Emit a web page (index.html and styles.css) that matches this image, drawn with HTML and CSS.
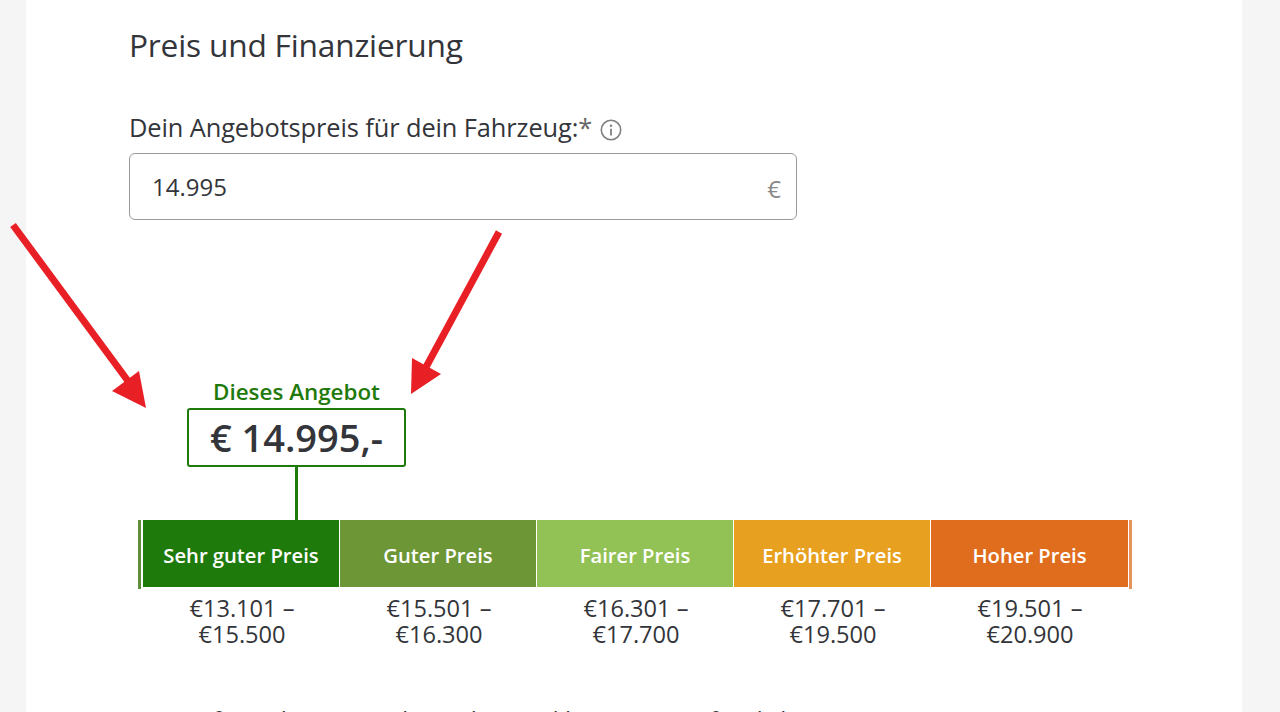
FILE: index.html
```html
<!DOCTYPE html>
<html lang="de">
<head>
  <meta charset="UTF-8">
  <meta name="viewport" content="width=device-width, initial-scale=1.0">
  <title>Preis und Finanzierung</title>
  <link rel="stylesheet" href="styles.css">
</head>
<body>

  <div class="page">
    <h2 class="title">Preis und Finanzierung</h2>

    <label class="field-label">Dein Angebotspreis für dein Fahrzeug:<span class="star">*</span>
      <svg class="info" width="22" height="22" viewBox="0 0 22 22">
        <circle cx="11" cy="11" r="9.7" fill="none" stroke="#808080" stroke-width="1.6"/>
        <circle cx="11" cy="6.8" r="1.2" fill="#808080"/>
        <path d="M11 9.8v6.6" stroke="#808080" stroke-width="1.8" fill="none"/>
      </svg>
    </label>
    <div class="price-input">
      <span>14.995</span>
      <span class="currency">€</span>
    </div>

    <!-- Price gauge -->
    <div class="offer">
      <div class="offer-label">Dieses Angebot</div>
      <div class="offer-box">€ 14.995,-</div>
      <div class="offer-line"></div>
    </div>

    <div class="gauge">
      <div class="bands">
        <div class="band band-1">Sehr guter Preis</div>
        <div class="band band-2">Guter Preis</div>
        <div class="band band-3">Fairer Preis</div>
        <div class="band band-4">Erhöhter Preis</div>
        <div class="band band-5">Hoher Preis</div>
      </div>
      <div class="ranges">
        <div class="range">€13.101 –<br>€15.500</div>
        <div class="range">€15.501 –<br>€16.300</div>
        <div class="range">€16.301 –<br>€17.700</div>
        <div class="range">€17.701 –<br>€19.500</div>
        <div class="range">€19.501 –<br>€20.900</div>
      </div>
    </div>

    <p class="note">Wir prüfen Fahrzeug und Angebot und bewerten es für dich.</p>
  </div>

  <!-- Red arrows drawn over the screenshot -->
  <svg class="arrows" width="1280" height="712" viewBox="0 0 1280 712">
    <path d="M13 225L128 381" stroke="#e91f26" stroke-width="7" fill="none"/>
    <path d="M146 408L112 391L139 371Z" fill="#e91f26"/>
    <path d="M499 232L425 369" stroke="#e91f26" stroke-width="7" fill="none"/>
    <path d="M411 394L412 358L441 374Z" fill="#e91f26"/>
  </svg>

</body>
</html>
```

FILE: styles.css
```css
/* Basic Styling */
body {
  margin: 0;
  height: 712px;
  overflow: hidden;
  background-color: #f5f5f5;
  color: #33353a;
  font-family: "Open Sans", "Noto Sans", Arial, sans-serif;
}

.page {
  box-sizing: border-box;
  width: 1216px;
  height: 712px;
  margin-left: 26px;
  padding: 25px 0 0 103px;
  background-color: #fff;
  overflow: hidden;
}

.title {
  margin: 0;
  font-size: 31.7px;
  line-height: 40px;
  font-weight: 400;
  letter-spacing: -0.2px;
}

.field-label {
  display: flex;
  align-items: center;
  margin-top: 46px;
  height: 32px;
  font-size: 25.4px;
  letter-spacing: -0.1px;
}

.star {
  color: #666;
}

.info {
  margin-left: 8px;
  margin-top: 5px;
}

.price-input {
  box-sizing: border-box;
  display: flex;
  justify-content: space-between;
  align-items: center;
  width: 668px;
  height: 67px;
  margin-top: 10px;
  padding: 0 15px 0 22px;
  border: 1px solid #999;
  border-radius: 6px;
  font-size: 24px;
}

.currency {
  color: #888;
  margin-top: 4px;
}

.offer {
  display: flex;
  flex-direction: column;
  align-items: center;
  width: 219px;
  margin: 158px 0 0 58px;
}

.offer-label {
  color: #1f7a0c;
  font-size: 22.4px;
  line-height: 30px;
  font-weight: 600;
  margin-top: -1px;
  margin-bottom: 1px;
}

.offer-box {
  box-sizing: border-box;
  width: 219px;
  height: 59px;
  border: 2px solid #1f7a0c;
  border-radius: 3px;
  text-align: center;
  font-size: 38px;
  line-height: 55px;
  font-weight: 600;
}

.offer-line {
  width: 3px;
  height: 53px;
  background-color: #1f7a0c;
}

.gauge {
  margin-left: 9px;
}

.bands {
  display: flex;
  align-items: flex-start;
  width: 994px;
  height: 69px;
  box-sizing: border-box;
  padding: 0 1px 0 2px;
  border-left: 3px solid #5f8f3c;
  border-right: 3px solid #e4935a;
}

.band {
  width: 196px;
  height: 67px;
  line-height: 70px;
  margin-right: 1px;
  color: #fff;
  text-align: center;
  font-size: 20.2px;
  font-weight: 600;
}

.band-1 { background-color: #1f7a0c; }
.band-2 { background-color: #6d9737; }
.band-3 { background-color: #92c255; }
.band-4 { background-color: #e8a020; }
.band-5 { background-color: #e06c1e; margin-right: 0; width: 197px; }

.ranges {
  display: flex;
  margin-left: 5.5px;
  margin-top: 6px;
}

.range {
  width: 197px;
  text-align: center;
  font-size: 23.6px;
  line-height: 26px;
}

.note {
  margin: 57px 0 0;
  font-size: 24px;
  line-height: 32px;
}

.arrows {
  position: absolute;
  top: 0;
  left: 0;
}
```
